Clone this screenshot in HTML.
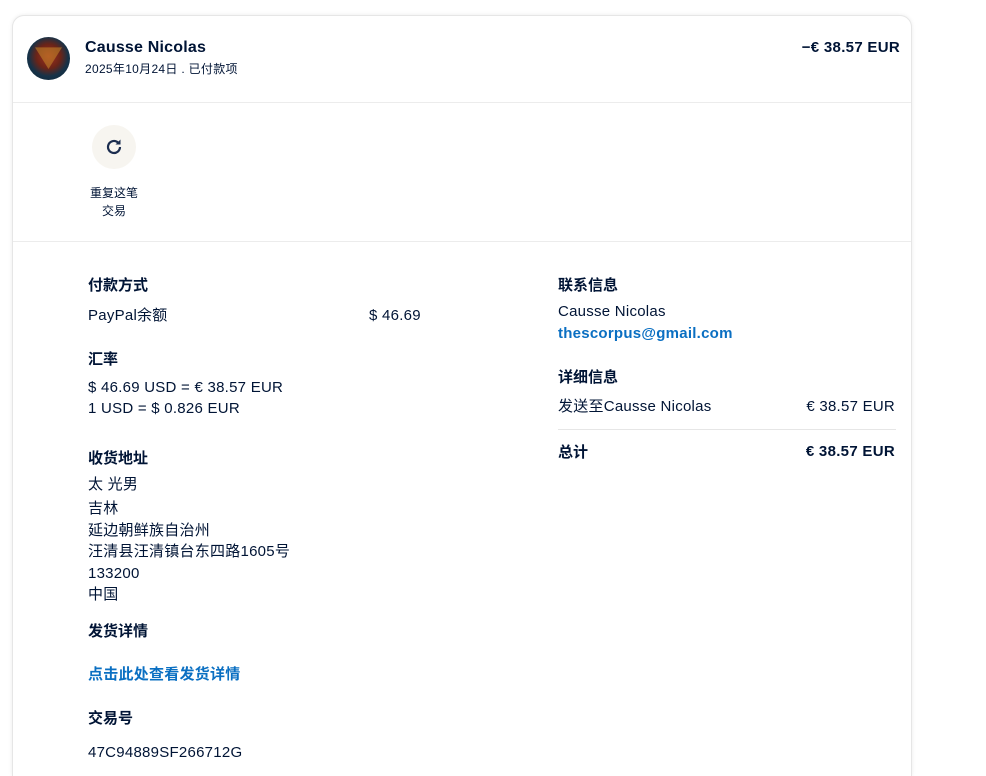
<!DOCTYPE html>
<html><head><meta charset="utf-8"><style>
*{margin:0;padding:0;box-sizing:border-box}
html,body{width:986px;height:776px;overflow:hidden}
body{background:#fff;font-family:"Liberation Sans","Noto Sans CJK SC",sans-serif;color:#001435;position:relative}
.card{position:absolute;left:12px;top:15px;width:900px;height:761px;border:1px solid #e6e6e6;border-bottom:none;border-radius:12px 12px 0 0;box-shadow:0 0 4px rgba(0,0,0,.08);background:#fff}
.a{position:absolute;white-space:nowrap}
.h{font-weight:bold;font-size:15px;line-height:20px}
.t{font-size:15px;line-height:20px;letter-spacing:.25px}
.hr{position:absolute;left:0;right:0;height:1px;background:#ececec}
.blue{color:#0a6fc2;font-weight:bold;font-size:15px;line-height:20px;letter-spacing:.25px}
</style></head><body>
<div class="card">
<div class="a" style="left:14px;top:21px;width:43px;height:43px;border-radius:50%;background:radial-gradient(circle at 50% 45%,#a0301f 0,#6a2418 38%,#163248 62%,#0f2535 100%)"></div>
<div class="a" style="left:22px;top:29px;width:27px;height:24px;background:#c98a2a;clip-path:polygon(0 10%,100% 10%,50% 100%);opacity:.55"></div>
<div class="a" style="left:72px;top:22px;font-weight:bold;font-size:16px;line-height:20px;letter-spacing:.2px">Causse Nicolas</div>
<div class="a" style="left:72px;top:45px;font-size:12px;line-height:16px;letter-spacing:.3px">2025年10月24日 . 已付款项</div>
<div class="a" style="right:11px;top:22px;font-weight:bold;font-size:15px;line-height:20px;letter-spacing:.3px">−€ 38.57 EUR</div>
<div class="hr" style="top:86px"></div>
<div class="a" style="left:79px;top:109px;width:44px;height:44px;border-radius:50%;background:#f7f5f0"></div>
<svg class="a" style="left:91px;top:121px" width="20" height="20" viewBox="0 0 20 20"><path d="M16 10a6 6 0 1 1-2-4.5" fill="none" stroke="#1b2d4f" stroke-width="2.2"/><path d="M16.5 2.5v5h-5z" fill="#1b2d4f"/></svg>
<div class="a" style="left:76px;top:168px;font-size:12px;text-align:center;width:50px;line-height:18px">重复这笔<br>交易</div>
<div class="hr" style="top:225px"></div>
<div class="a h" style="left:75px;top:260px">付款方式</div>
<div class="a t" style="left:75px;top:290px">PayPal余额</div>
<div class="a t" style="left:356px;top:290px">$ 46.69</div>
<div class="a h" style="left:75px;top:334px">汇率</div>
<div class="a t" style="left:75px;top:361px;line-height:21px">$ 46.69 USD = € 38.57 EUR<br>1 USD = $ 0.826 EUR</div>
<div class="a h" style="left:75px;top:433px">收货地址</div>
<div class="a t" style="left:75px;top:458px;line-height:22px">太 光男</div>
<div class="a t" style="left:75px;top:482px;line-height:21.5px">吉林<br>延边朝鲜族自治州<br>汪清县汪清镇台东四路1605号<br>133200<br>中国</div>
<div class="a h" style="left:75px;top:606px">发货详情</div>
<div class="a blue" style="left:75px;top:649px">点击此处查看发货详情</div>
<div class="a h" style="left:75px;top:693px">交易号</div>
<div class="a t" style="left:75px;top:727px">47C94889SF266712G</div>
<div class="a h" style="left:545px;top:260px">联系信息</div>
<div class="a t" style="left:545px;top:286px">Causse Nicolas</div>
<div class="a blue" style="left:545px;top:308px">thescorpus@gmail.com</div>
<div class="a h" style="left:545px;top:352px">详细信息</div>
<div class="a t" style="left:545px;top:381px">发送至Causse Nicolas</div>
<div class="a t" style="right:16px;top:381px">€ 38.57 EUR</div>
<div class="a" style="left:545px;width:338px;top:413px;height:1px;background:#e6e6e6"></div>
<div class="a h" style="left:545px;top:427px">总计</div>
<div class="a h" style="right:16px;top:426px;letter-spacing:.3px">€ 38.57 EUR</div>
</div>
</body></html>
